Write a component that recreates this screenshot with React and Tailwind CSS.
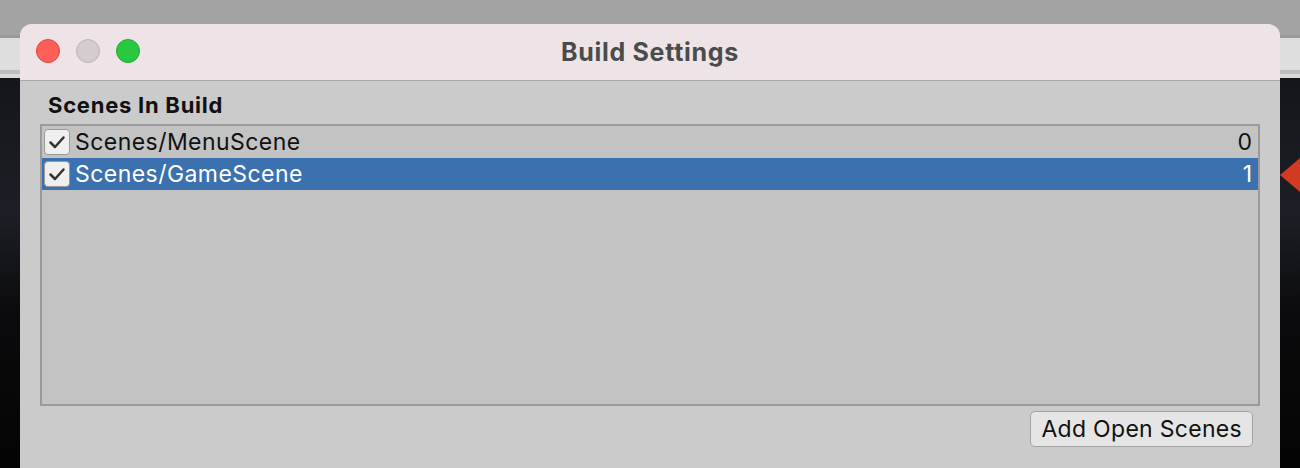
import React from "react";

const font = { fontFamily: "Inter, 'Noto Sans', 'Liberation Sans', sans-serif" };

function Check() {
  return (
    <div className="w-[26px] h-[26px] rounded-[4px] bg-[#efefef] border border-[#9a9a9a] flex items-center justify-center shrink-0">
      <svg width="20" height="20" viewBox="0 0 20 20">
        <path d="M3.5 10.5 L8 15 L16.5 5.5" fill="none" stroke="#333333" strokeWidth="2.5" strokeLinecap="round" strokeLinejoin="round" />
      </svg>
    </div>
  );
}

function Row({ name, idx, selected }) {
  return (
    <div className={`h-[32px] flex items-center pl-[2px] pr-[6px] ${selected ? "bg-[#3b71ae] text-white" : "text-[#111]"}`}>
      <Check />
      <span className="ml-[5px] text-[23px] tracking-[0.45px] leading-none flex-1">{name}</span>
      <span className="text-[23px] leading-none">{idx}</span>
    </div>
  );
}

export default function App() {
  return (
    <div className="relative w-[1300px] h-[468px] overflow-hidden" style={font}>
      {/* background desktop */}
      <div className="flex flex-col h-full">
        <div className="h-[35px] bg-[#a3a3a3]" />
        <div className="h-[3px] bg-[#9a9a9a]" />
        <div className="h-[32px] bg-[#dedede]" />
        <div className="h-[4px] bg-[#bdbdbd]" />
        <div className="h-[4px] bg-[#d9d9d9]" />
        <div className="flex-1 bg-[linear-gradient(180deg,#15161b_0%,#1d1f26_35%,#0b0b0d_60%,#040404_100%)]" />
      </div>
      <div className="absolute left-[1280px] top-[158px] w-0 h-0 border-t-[17px] border-b-[17px] border-r-[20px] border-t-transparent border-b-transparent border-r-[#d23a22]" />

      {/* window */}
      <div className="absolute left-[20px] top-[24px] w-[1260px] h-[460px] rounded-t-[12px] overflow-hidden bg-[#cbcbcb] flex flex-col">
        <div className="relative h-[57px] bg-[#eee4e7] border-b border-[#a9a9a9] flex items-center justify-center shrink-0">
          <div className="absolute left-[16px] top-[15px] flex gap-[16px]">
            <div className="w-[24px] h-[24px] rounded-full bg-[#fe5f57] border border-[#e0443e]" />
            <div className="w-[24px] h-[24px] rounded-full bg-[#d4cccf] border border-[#bdb4b7]" />
            <div className="w-[24px] h-[24px] rounded-full bg-[#2ac840] border border-[#1ea931]" />
          </div>
          <span className="text-[25px] tracking-[0.7px] font-bold text-[#4b4b4b] leading-none">Build Settings</span>
        </div>
        <div className="px-[20px] pt-[13px] flex flex-col">
          <div className="pl-[8px] text-[22px] tracking-[0.75px] font-bold text-[#111] leading-none h-[30px]">Scenes In Build</div>
          <div className="h-[282px] border-2 border-[#9a9a9a] bg-[#c3c3c3]">
            <Row name="Scenes/MenuScene" idx="0" />
            <Row name="Scenes/GameScene" idx="1" selected />
          </div>
          <div className="flex justify-end pr-[7px] pt-[5px]">
            <button className="h-[36px] px-[10px] rounded-[5px] bg-[#e5e5e5] border border-[#a3a3a3] text-[23px] tracking-[0.3px] leading-none text-[#111]">
              Add Open Scenes
            </button>
          </div>
        </div>
      </div>
    </div>
  );
}
